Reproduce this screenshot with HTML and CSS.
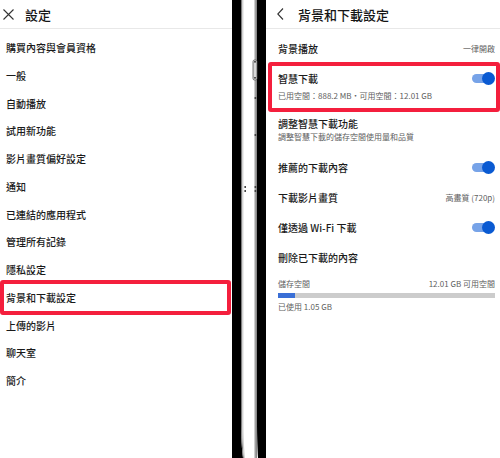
FILE: index.html
```html
<!DOCTYPE html>
<html lang="zh-Hant">
<head>
  <meta charset="UTF-8">
  <meta name="viewport" content="width=device-width, initial-scale=1.0">
  <title>設定</title>
  <link rel="stylesheet" href="styles.css">
</head>
<body>
  <div class="screen">

    <section class="panel settings">
      <header class="bar">
        <svg class="icon-close" viewBox="0 0 11 11" width="11" height="11">
          <path d="M0.5 0.5 L10.5 10.5 M10.5 0.5 L0.5 10.5" stroke="#333" stroke-width="1.1" fill="none"/>
        </svg>
        <h1>設定</h1>
      </header>
      <ul class="menu">
        <li>購買內容與會員資格</li>
        <li>一般</li>
        <li>自動播放</li>
        <li>試用新功能</li>
        <li>影片畫質偏好設定</li>
        <li>通知</li>
        <li>已連結的應用程式</li>
        <li>管理所有記錄</li>
        <li>隱私設定</li>
        <li class="marked">背景和下載設定</li>
        <li>上傳的影片</li>
        <li>聊天室</li>
        <li>簡介</li>
      </ul>
    </section>

    <svg class="bezel" viewBox="0 0 34 458" width="34" height="458">
      <rect x="0" y="0" width="34" height="458" fill="#fff"/>
      <path d="M0 0 H9 V420 C9 438 10 450 11 458 H0 Z" fill="#000"/>
      <path d="M9 0 H10.2 V420 C10.2 438 11 450 12 458 H11 C10 450 9 438 9 420 Z" fill="#7d7d7d"/>
      <path d="M10.2 0 H11.4 V420 C11.4 438 12.2 450 13 458 H12 C11 450 10.2 438 10.2 420 Z" fill="#cfcfcf"/>
      <rect x="22" y="0" width="1.2" height="458" fill="#cfcfcf"/>
      <rect x="23.2" y="0" width="1.8" height="458" fill="#8a8a8a"/>
      <path d="M25 0 H34 V458 H26 C25.6 450 25 438 25 420 Z" fill="#000"/>
      <rect x="21" y="60" width="4" height="20" rx="1.5" fill="#d8d8d8" stroke="#555" stroke-width="0.8"/>
      <rect x="22.2" y="61" width="1.6" height="1.6" fill="#333"/>
      <rect x="22.2" y="77" width="1.6" height="1.6" fill="#333"/>
      <rect x="22.6" y="97" width="1.6" height="2" fill="#444"/>
      <rect x="22.6" y="134" width="1.6" height="2" fill="#444"/>
      <rect x="12.4" y="186" width="1.6" height="2" fill="#444"/>
      <rect x="12.4" y="190" width="1.6" height="2" fill="#444"/>
      <rect x="22.6" y="186" width="1.6" height="2" fill="#444"/>
      <rect x="22.6" y="190" width="1.6" height="2" fill="#444"/>
    </svg>

    <section class="panel downloads">
      <header class="bar">
        <svg class="icon-back" viewBox="0 0 7 12" width="7" height="12">
          <path d="M6 0.5 L0.8 6 L6 11.5" stroke="#333" stroke-width="1.1" fill="none"/>
        </svg>
        <h1>背景和下載設定</h1>
      </header>
      <div class="rows">
        <div class="row">
          <div class="line"><span>背景播放</span><span class="value">一律開啟</span></div>
        </div>
        <div class="row smart marked">
          <div class="line"><span>智慧下載</span><span class="toggle"></span></div>
          <div class="sub">已用空間：888.2 MB・可用空間：12.01 GB</div>
        </div>
        <div class="row tune">
          <div class="line"><span>調整智慧下載功能</span></div>
          <div class="sub">調整智慧下載的儲存空間使用量和品質</div>
        </div>
        <div class="row">
          <div class="line"><span>推薦的下載內容</span><span class="toggle"></span></div>
        </div>
        <div class="row">
          <div class="line"><span>下載影片畫質</span><span class="value">高畫質 (720p)</span></div>
        </div>
        <div class="row">
          <div class="line"><span>僅透過 Wi-Fi 下載</span><span class="toggle"></span></div>
        </div>
        <div class="row">
          <div class="line"><span>刪除已下載的內容</span></div>
        </div>
        <div class="storage">
          <div class="line small"><span>儲存空間</span><span>12.01 GB 可用空間</span></div>
          <div class="meter"><div class="meter-fill"></div></div>
          <div class="used">已使用 1.05 GB</div>
        </div>
      </div>
    </section>

  </div>
</body>
</html>
```

FILE: styles.css
```css
html, body {
  margin: 0;
  padding: 0;
  background-color: #fff;
}
body {
  font-family: "Noto Sans CJK TC", "Noto Sans", "Liberation Sans", sans-serif;
  color: #1a1a1a;
}
.screen {
  display: flex;
  width: 500px;
  height: 458px;
  overflow: hidden;
}
.panel {
  background-color: #fff;
  overflow: hidden;
}
.settings {
  width: 232px;
  flex: none;
}
.bezel {
  display: block;
  flex: none;
}
.downloads {
  flex: 1;
  min-width: 0;
}
.bar {
  height: 28px;
  border-bottom: 1px solid #e8e8e8;
  display: flex;
  align-items: center;
}
.bar h1 {
  margin: 0;
  font-size: 13px;
  font-weight: 500;
  line-height: 1;
  color: #151515;
}
.settings .bar {
  padding-left: 3px;
}
.icon-close {
  margin-right: 11px;
}
.downloads .bar {
  padding-left: 11px;
}
.icon-back {
  margin-right: 14px;
}
.menu {
  list-style: none;
  margin: 0;
  padding: 5px 0 0;
}
.menu li {
  height: 27.75px;
  line-height: 27.75px;
  padding-left: 6px;
  font-size: 10px;
  font-weight: 500;
  position: relative;
}
.marked {
  position: relative;
}
.marked::after {
  content: "";
  position: absolute;
  border: 4px solid #f41f3d;
  border-radius: 3px;
}
.menu .marked::after {
  top: -4px;
  bottom: -3px;
  left: 0;
  right: 1px;
}
.rows {
  padding-top: 4px;
}
.row {
  padding: 8px 5px 8px 12px;
}
.line {
  display: flex;
  align-items: center;
  justify-content: space-between;
  height: 14px;
  font-size: 10px;
  font-weight: 500;
}
.value {
  font-size: 8px;
  font-weight: normal;
  color: #606060;
}
.sub {
  font-size: 8px;
  line-height: 12px;
  color: #606060;
}
.smart {
  padding-bottom: 6px;
}
.smart .sub {
  margin-top: 5px;
}
.smart.marked::after {
  top: -1px;
  bottom: -4px;
  left: 2px;
  right: 0;
}
.tune {
  padding-bottom: 9px;
}
.tune .sub {
  margin-top: 1px;
}
.toggle {
  position: relative;
  width: 23px;
  height: 13px;
}
.toggle::before {
  content: "";
  position: absolute;
  left: 0;
  top: 2px;
  width: 20px;
  height: 9px;
  border-radius: 5px;
  background-color: #77a3e8;
}
.toggle::after {
  content: "";
  position: absolute;
  right: 0;
  top: 0;
  width: 13px;
  height: 13px;
  border-radius: 50%;
  background-color: #0a5ad2;
}
.storage {
  padding: 5px 5px 0 12px;
}
.line.small {
  height: 12px;
  font-size: 8px;
  font-weight: normal;
  color: #606060;
}
.meter {
  margin-top: 4px;
  height: 5px;
  background-color: #cccccc;
}
.meter-fill {
  width: 17px;
  height: 100%;
  background-color: #3a6fd6;
}
.used {
  margin-top: 3px;
  font-size: 8px;
  line-height: 12px;
  color: #606060;
}
```
